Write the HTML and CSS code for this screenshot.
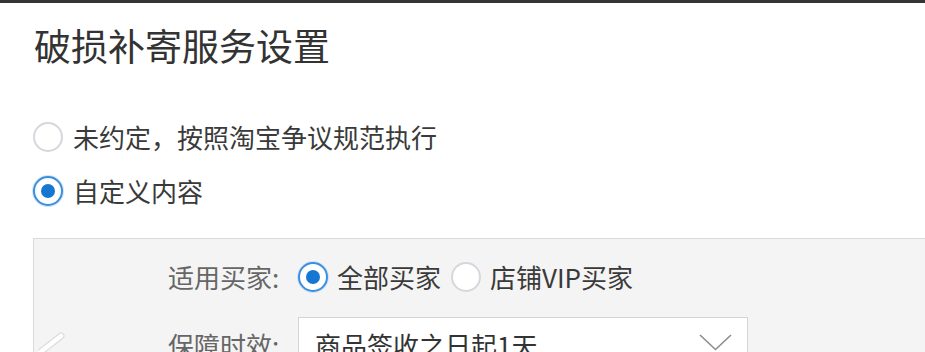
FILE: index.html
```html
<!DOCTYPE html>
<html lang="zh-CN">
<head>
<meta charset="utf-8">
<title>破损补寄服务设置</title>
<link rel="stylesheet" href="styles.css">
</head>
<body>
<div class="topbar"></div>
<div class="page">
  <h1 class="title">破损补寄服务设置</h1>
  <div class="options">
    <label class="radio"><span class="circle"></span><span class="text">未约定，按照淘宝争议规范执行</span></label>
    <label class="radio checked"><span class="circle"></span><span class="text">自定义内容</span></label>
  </div>
  <div class="panel">
    <div class="row">
      <span class="label">适用买家:</span>
      <div class="choices">
        <label class="radio checked small"><span class="circle"></span><span class="text">全部买家</span></label>
        <label class="radio small"><span class="circle"></span><span class="text">店铺VIP买家</span></label>
      </div>
    </div>
    <div class="row">
      <span class="label">保障时效:</span>
      <div class="select">
        <span class="value">商品签收之日起1天</span>
        <svg class="chevron" width="33" height="17" viewBox="0 0 33 17"><polyline points="1,1 16.5,15.5 32,1" fill="none" stroke="#8c8c92" stroke-width="1.6"/></svg>
      </div>
    </div>
    <svg class="slash" width="30" height="30" viewBox="0 0 30 30"><line x1="23" y1="4" x2="-4" y2="25" stroke="#dcdcdc" stroke-width="7" stroke-linecap="round"/><line x1="23" y1="4" x2="-4" y2="25" stroke="#ffffff" stroke-width="4.5" stroke-linecap="round"/></svg>
  </div>
</div>
</body>
</html>
```

FILE: styles.css
```css
html, body {
  margin: 0;
  padding: 0;
  background: #ffffff;
  overflow: hidden;
}
body {
  font-family: "Noto Sans CJK SC", "Noto Sans", sans-serif;
  color: #333;
}
.topbar {
  height: 3px;
  background: #353535;
}
.page {
  padding: 20px 0 0 33px;
}
.title {
  margin: 0;
  font-size: 37px;
  line-height: 44px;
  font-weight: normal;
  color: #333;
  padding-left: 1px;
}
.options {
  margin-top: 55px;
  display: flex;
  flex-direction: column;
  gap: 24px;
}
.radio {
  display: flex;
  align-items: center;
  height: 30px;
  font-size: 26px;
  line-height: 30px;
  color: #3a3a3a;
}
.radio .circle {
  box-sizing: border-box;
  width: 30px;
  height: 30px;
  border-radius: 50%;
  border: 2px solid #d6d6dc;
  background: #fff;
  flex-shrink: 0;
  margin-right: 10px;
  position: relative;
}
.radio.checked .circle {
  border-color: #3b8ee0;
  box-shadow: 0 0 0 1px #cfe3f7;
}
.radio.checked .circle::after {
  content: "";
  position: absolute;
  left: 6px;
  top: 6px;
  width: 14px;
  height: 14px;
  border-radius: 50%;
  background: #1677d2;
}
.panel {
  position: relative;
  margin-top: 32px;
  width: 1000px;
  height: 200px;
  box-sizing: border-box;
  border: 1px solid #dadada;
  background: #f4f4f4;
  padding: 18px 0 0 134px;
  display: flex;
  flex-direction: column;
  gap: 20px;
}
.row {
  display: flex;
  align-items: center;
}
.label {
  width: 130px;
  flex-shrink: 0;
  font-size: 26px;
  color: #666;
  line-height: 40px;
}
.choices {
  display: flex;
  align-items: center;
  height: 40px;
  gap: 10px;
}
.radio.small .circle {
  margin-right: 9px;
}
.select {
  box-sizing: border-box;
  width: 450px;
  height: 56px;
  background: #fff;
  border: 1px solid #d4d4da;
  display: flex;
  align-items: center;
  justify-content: space-between;
  padding: 0 15px 0 16px;
  font-size: 26px;
  color: #333;
}
.value {
  line-height: 30px;
}
.chevron {
  margin-top: -5px;
}
.slash {
  position: absolute;
  left: 4px;
  top: 93px;
}
```
